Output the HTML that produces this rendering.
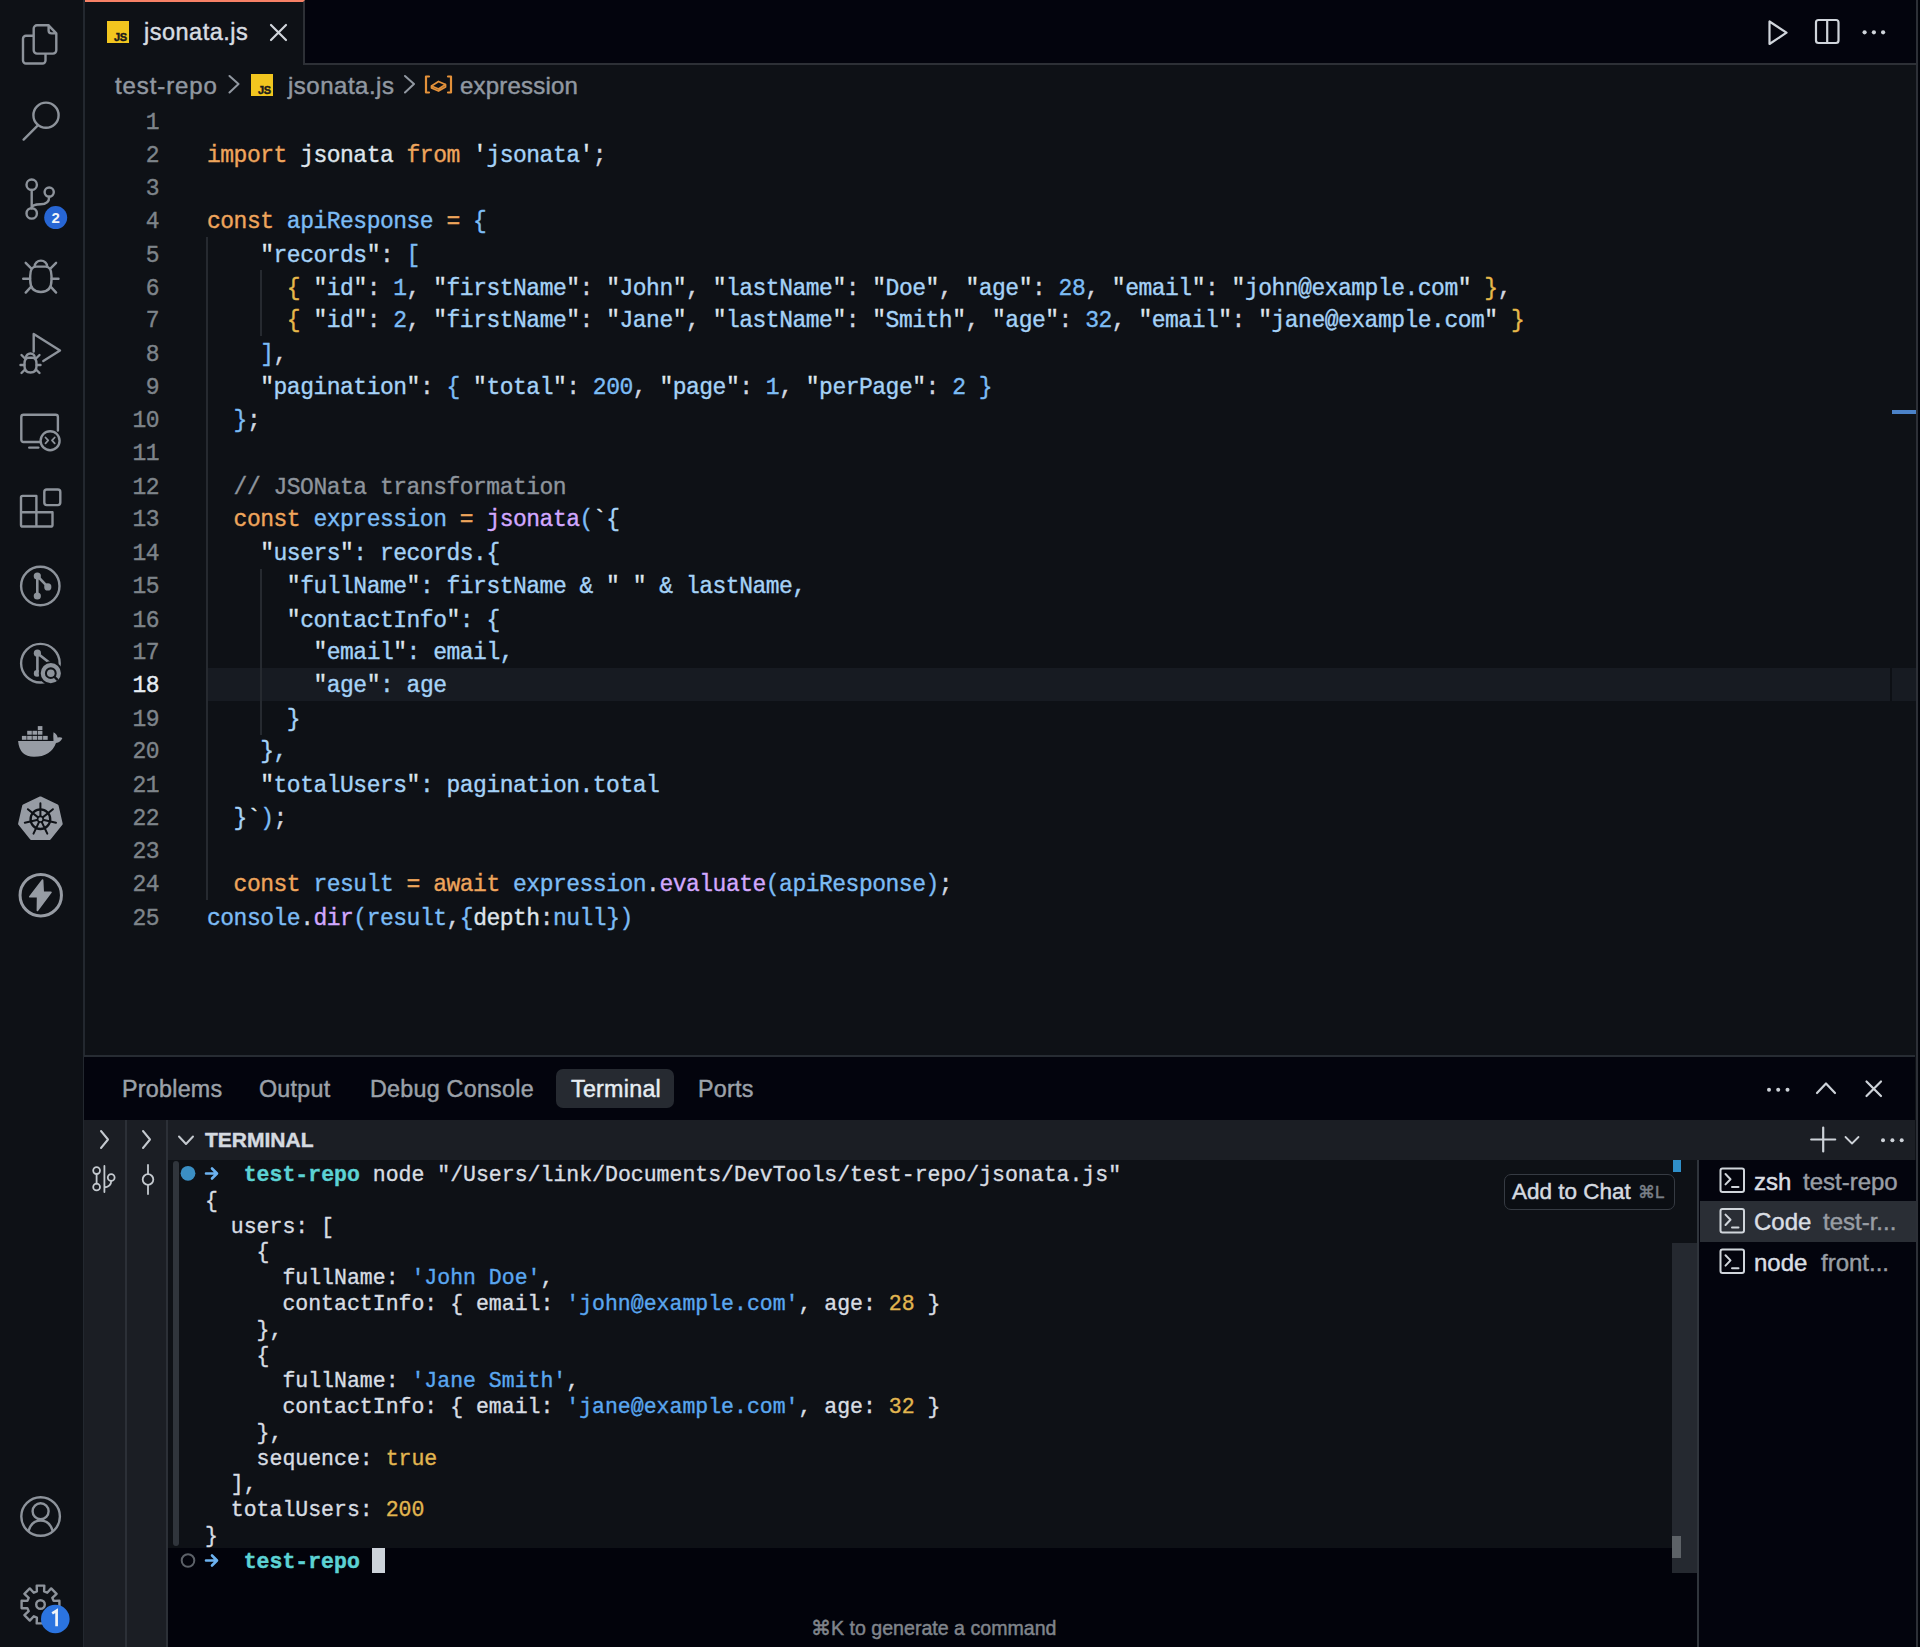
<!DOCTYPE html>
<html><head><meta charset="utf-8">
<style>
*{margin:0;padding:0;box-sizing:border-box}
html,body{width:1920px;height:1647px;overflow:hidden;background:#0e1116}
body{position:relative;font-family:"Liberation Sans",sans-serif}
.abs{position:absolute}
i{font-style:normal}
.t{position:absolute;white-space:pre;line-height:0;-webkit-text-stroke:0.45px currentColor}
/* activity bar */
#act{position:absolute;left:0;top:0;width:85px;height:1647px;background:#0e1116;border-right:2px solid #23282f}
/* tab bar */
#tabs{position:absolute;left:85px;top:0;width:1832px;height:65px;background:#03040d;border-bottom:2px solid #2d3036}
#tab1{position:absolute;left:85px;top:0;width:220px;height:65px;background:#0e1116;border-top:2px solid #f78166;border-right:2px solid #2d3036}
#rborder{position:absolute;left:1916px;top:0;width:2px;height:1647px;background:#2d3037}
#rfill{position:absolute;left:1918px;top:0;width:2px;height:1647px;background:#02040a}
/* editor */
#gutter{position:absolute;left:100px;top:105.5px;width:59px;font-family:"Liberation Mono",monospace;font-size:23px;line-height:30.7037px;transform:scaleY(1.08);transform-origin:0 0;-webkit-text-stroke:0.35px currentColor;text-align:right;color:#7e848a;letter-spacing:-0.5px}
#gutter div{height:30.7037px}
#gutter .cur{color:#e6edf3}
#code{position:absolute;left:207px;top:105.5px;font-family:"Liberation Mono",monospace;font-size:23px;line-height:30.7037px;transform:scaleY(1.08);transform-origin:0 0;-webkit-text-stroke:0.35px currentColor;letter-spacing:-0.5px;white-space:pre;color:#d1d7e0}
.ln{height:30.7037px}
.k{color:#eea55c}.v{color:#7cbcf5}.s{color:#a5d2f7}.p{color:#d1d7e0}.n{color:#7cbcf5}.y{color:#e6b84a}.f{color:#d2a8ff}.c{color:#8d949c}.w{color:#dfe5eb}.q{color:#dfe5eb}
#curline{position:absolute;left:207px;top:668.3px;width:1709px;height:33.2px;background:#171b22}
.guide{position:absolute;width:2px;background:#262a30}
/* panel */
#panel{position:absolute;left:84px;top:1055px;width:1831px;height:592px;background:#03040d;border-top:2px solid #272c33}
.ptab{font-size:23.3px;color:#9ba1a9;letter-spacing:0.25px}
#pill{position:absolute;left:556px;top:1069px;width:118px;height:39px;border-radius:7px;background:#262a31}
#strips{position:absolute;left:84px;top:1120px;width:84px;height:527px;background:#1b1e24}
.vline{position:absolute;width:2px;background:#2c3037}
#thead{position:absolute;left:168px;top:1120px;width:1747px;height:40px;background:#1b1e24}
#tbody{position:absolute;left:168px;top:1160px;width:1530px;height:388px;background:#0e1116}
#tinput{position:absolute;left:168px;top:1548px;width:1530px;height:99px;background:#02030b}
#tgut{position:absolute;left:173px;top:1161px;width:6px;height:385px;border-radius:3px;background:#30353c}
#term{position:absolute;left:205px;top:1163.2px;font-family:"Liberation Mono",monospace;font-size:21.5px;line-height:25.78px;-webkit-text-stroke:0.35px currentColor;white-space:pre;color:#d8dde3}
.tl{height:25.78px}
.tw{color:#d8dde3}.ts{color:#5aa7f0}.tn{color:#e2b650}.tc{color:#5cd2d4;font-weight:bold}
#tlist{position:absolute;left:1699px;top:1160px;width:1216px;height:487px;background:#03040d}
#tsel{position:absolute;left:1700px;top:1201px;width:1215px;height:41px;background:#2a2e35}
#scroll{position:absolute;left:1672px;top:1243px;width:25px;height:330px;background:#252930}
#thumb{position:absolute;left:1672px;top:1535.5px;width:8.5px;height:22px;background:#5d6267}
#chat{position:absolute;left:1504px;top:1174px;width:171px;height:36px;border:1.5px solid #363b43;border-radius:7px;background:#0b0e13}
.sans{font-family:"Liberation Sans",sans-serif}
</style></head><body>
<div id="act"></div>
<svg class="abs" style="left:0;top:0" width="84" height="1647" viewBox="0 0 84 1647" fill="none" stroke="#8d939b" stroke-width="2.4" stroke-linecap="round" stroke-linejoin="round">
<!-- files -->
<path d="M32.6 35.8 H26 a3 3 0 0 0 -3 3 V60.5 a3 3 0 0 0 3 3 H42.5 a3 3 0 0 0 3 -3 V54.4"/>
<path d="M48.6 25.3 H37 a3.3 3.3 0 0 0 -3.3 3.3 V50.3 a3.3 3.3 0 0 0 3.3 3.3 H53 a3.3 3.3 0 0 0 3.3 -3.3 V33.4 Z M48.6 25.3 V30.5 a2.9 2.9 0 0 0 2.9 2.9 H56.3"/>
<!-- search -->
<circle cx="46" cy="115.2" r="12.6"/>
<path d="M23.6 139.6 L37.1 126.1"/>
<!-- source control -->
<circle cx="31.7" cy="184.7" r="5.2"/>
<circle cx="49.2" cy="192.1" r="4.6"/>
<circle cx="31.7" cy="213.4" r="5.2"/>
<path d="M31.7 190 V208.2"/>
<path d="M49.2 196.7 Q49.2 204.2 40.5 204.3 Q32 204.4 31.7 208"/>
<!-- debug bug -->
<path d="M34.6 266.6 a6.3 6 0 0 1 12.6 0"/>
<path d="M30.2 276 Q30.2 266.6 36 266.6 H45.6 Q51.5 266.6 51.5 276 V280 Q51.5 292 40.9 292 Q30.2 292 30.2 280 Z"/>
<path d="M23.2 278.8 H30 M51.7 278.8 H58.5 M25.7 262.8 L31.2 268.4 M56.1 262.8 L50.6 268.4 M25.7 292.6 L31.2 286.6 M56.1 292.6 L50.6 286.6"/>
<!-- run & debug -->
<path d="M33.7 351.5 V334 L60 350.4 L43.3 361"/>
<path d="M26 357.7 a4.4 4.2 0 0 1 8.8 0"/>
<path d="M24.5 364 Q24.5 357.8 28.5 357.8 H32.5 Q36.5 357.8 36.5 364 V366 Q36.5 372.5 30.5 372.5 Q24.5 372.5 24.5 366 Z"/>
<path d="M20.5 365 H24.3 M36.7 365 H40.5 M21.5 355 L25 358.5 M39.5 355 L36 358.5 M21.5 373 L25 369.5 M39.5 373 L36 369.5"/>
<!-- remote explorer -->
<path d="M40 442 H23.5 a2.2 2.2 0 0 1 -2.2 -2.2 V416.9 a2.2 2.2 0 0 1 2.2 -2.2 H55.7 a2.2 2.2 0 0 1 2.2 2.2 V430.5"/>
<path d="M29.2 447.6 H38.3"/>
<circle cx="50.1" cy="440.7" r="9.5"/>
<path d="M45.5 437.5 L48.2 440.4 L45.5 443.3 M54.7 437.5 L52 440.4 L54.7 443.3" stroke-width="1.8"/>
<!-- extensions -->
<path d="M22.6 495.9 H36.4 V526.5 H22.6 a1.6 1.6 0 0 1 -1.6 -1.6 V497.5 a1.6 1.6 0 0 1 1.6 -1.6 Z M21 512.2 H52.5 V524.9 a1.6 1.6 0 0 1 -1.6 1.6 H36.4"/>
<rect x="44.3" y="489.5" width="16" height="15.6" rx="2.5"/>
<!-- gitlens graph -->
<circle cx="40.3" cy="586" r="19.2"/>
<path d="M37.3 576 V596 M37.3 576 L47.8 586.9" stroke-width="2.6"/>
<circle cx="37.3" cy="576" r="3.6" fill="#8d939b" stroke="none"/>
<circle cx="47.8" cy="586.9" r="3.6" fill="#8d939b" stroke="none"/>
<circle cx="37.3" cy="596" r="3.6" fill="#8d939b" stroke="none"/>
<!-- gitlens inspect -->
<circle cx="40.4" cy="663.2" r="19.3"/>
<path d="M37.4 653.2 V673.4 M37.4 653.2 L49.5 662.8" stroke-width="2.6"/>
<circle cx="37.4" cy="653.2" r="3.6" fill="#8d939b" stroke="none"/>
<circle cx="37.1" cy="673.4" r="3.3" fill="#8d939b" stroke="none"/>
<circle cx="50.8" cy="673.2" r="12" fill="#0e1116" stroke="none"/>
<circle cx="50.8" cy="673.2" r="8" stroke-width="4.2"/>
<circle cx="50.8" cy="673.2" r="3.8" fill="#8d939b" stroke="none"/>
<path d="M54.6 677 L57.2 679.6" stroke="#0e1116" stroke-width="2.4"/>
<!-- docker -->
<g fill="#979ca4" stroke="none">
<path d="M18.1 741 H53.5 Q53 736 53.5 732.3 Q57 734 57.6 737.5 Q60.5 736.8 62.4 738 Q60.5 742.5 56 743 Q51 756.8 34 756.8 Q19.5 756.8 18.1 741 Z"/>
<rect x="21.9" y="735.9" width="4.6" height="3.9"/><rect x="27.2" y="735.9" width="4.6" height="3.9"/><rect x="32.5" y="735.9" width="4.6" height="3.9"/><rect x="37.8" y="735.9" width="4.6" height="3.9"/><rect x="43.1" y="735.9" width="4.6" height="3.9"/>
<rect x="27.2" y="730.8" width="4.6" height="3.9"/><rect x="32.5" y="730.8" width="4.6" height="3.9"/><rect x="37.8" y="730.8" width="4.6" height="3.9"/>
<rect x="37.8" y="726.1" width="4.6" height="3.9"/>
</g>
<!-- kubernetes -->
<path d="M40.4 797.9 L57.1 805.9 L61.2 823.9 L49.6 838.4 L31.2 838.4 L19.6 823.9 L23.7 805.9 Z" fill="#979ca4" stroke="#979ca4" stroke-width="3"/>
<circle cx="40.4" cy="819.2" r="9.8" stroke="#0e1116" stroke-width="2.4"/>
<path d="M40.4 816.7 L40.4 803.2 M42.4 817.6 L52.9 809.2 M42.8 819.8 L56.0 822.8 M41.5 821.5 L47.3 833.6 M39.3 821.5 L33.5 833.6 M38.0 819.8 L24.8 822.8 M38.4 817.6 L27.9 809.2 " stroke="#0e1116" stroke-width="2"/>
<circle cx="40.4" cy="819.2" r="2.8" fill="#979ca4" stroke="#0e1116" stroke-width="1.6"/>
<!-- lightning -->
<circle cx="40.75" cy="895.2" r="20.7" stroke="#979ca4" stroke-width="3"/>
<path d="M42.6 880 L29.8 896.8 H37.6 L37.4 910.5 L51 892.3 H43.2 Z" fill="#979ca4" stroke="#979ca4" stroke-width="1.6"/>
<!-- account -->
<circle cx="40.6" cy="1516.5" r="19.3"/>
<circle cx="40.6" cy="1511.2" r="8"/>
<path d="M28.5 1531 Q31.5 1520.5 40.6 1520.5 Q49.7 1520.5 52.7 1531"/>
<!-- gear -->
<path d="M36.9 1591.4 L36.7 1585.6 L44.3 1585.6 L44.1 1591.4 L47.2 1592.7 L51.2 1588.4 L56.6 1593.8 L52.3 1597.8 L53.6 1600.9 L59.4 1600.7 L59.4 1608.3 L53.6 1608.1 L52.3 1611.2 L56.6 1615.2 L51.2 1620.6 L47.2 1616.3 L44.1 1617.6 L44.3 1623.4 L36.7 1623.4 L36.9 1617.6 L33.8 1616.3 L29.8 1620.6 L24.4 1615.2 L28.7 1611.2 L27.4 1608.1 L21.6 1608.3 L21.6 1600.7 L27.4 1600.9 L28.7 1597.8 L24.4 1593.8 L29.8 1588.4 L33.8 1592.7 Z"/>
<circle cx="40.5" cy="1604.5" r="4.3"/>
<circle cx="55.7" cy="217.6" r="11.5" fill="#2766d4" stroke="none"/>
<text x="55.7" y="223" text-anchor="middle" style="font-family:'Liberation Sans',sans-serif;font-weight:bold" font-size="15" fill="#f0f4f8" stroke="none">2</text>
<circle cx="55.3" cy="1619" r="14.3" fill="#2b74e0" stroke="none"/>
<path d="M52.2 1613.3 L56.6 1610.6 V1626.2" stroke="#f0f4f8" stroke-width="2.7" stroke-linecap="butt" stroke-linejoin="miter" fill="none"/>
</svg>

<div id="tabs"></div>
<div id="tab1"></div>
<!-- tab content -->
<div class="abs" style="left:107px;top:21px;width:22px;height:22px;background:#f2c61f"></div>
<div class="t" style="left:114px;top:37px;font-size:11px;font-weight:bold;color:#1b1b1b;letter-spacing:-0.3px">JS</div>
<div class="t" style="left:144px;top:32.3px;font-size:23.5px;color:#d8dde2;letter-spacing:0.5px">jsonata.js</div>
<svg class="abs" style="left:0;top:0" width="1920" height="64" fill="none" stroke="#d0d5db" stroke-width="2.2" stroke-linecap="round" stroke-linejoin="round">
<path d="M271 25 L286 40 M286 25 L271 40"/>
<path d="M1769.5 21.5 V44 L1786.5 32.7 Z"/>
<rect x="1816" y="20" width="22.5" height="23" rx="2.5"/>
<path d="M1827.2 20 V43"/>
<g fill="#d0d5db" stroke="none"><circle cx="1864.6" cy="32.3" r="2.1"/><circle cx="1873.9" cy="32.3" r="2.1"/><circle cx="1883.1" cy="32.3" r="2.1"/></g>
</svg>
<!-- breadcrumbs -->
<div class="t" style="left:115px;top:86px;font-size:24px;color:#9198a1;letter-spacing:0.9px">test-repo</div>
<div class="abs" style="left:251px;top:74px;width:22px;height:22px;background:#f2c61f"></div>
<div class="t" style="left:258px;top:90px;font-size:11px;font-weight:bold;color:#1b1b1b;letter-spacing:-0.3px">JS</div>
<div class="t" style="left:288px;top:86px;font-size:24px;color:#9198a1;letter-spacing:0.5px">jsonata.js</div>
<div class="t" style="left:460px;top:86px;font-size:24px;color:#9198a1;letter-spacing:0.2px">expression</div>
<svg class="abs" style="left:0;top:64px" width="600" height="40" fill="none" stroke="#9198a1" stroke-width="2" stroke-linecap="round" stroke-linejoin="round">
<path d="M229.5 12 L238.5 20 L229.5 28.5 M405 12 L414 20 L405 28.5"/>
<g stroke="#e3913a" stroke-width="2.2"><path d="M429 12.5 H426 V28.5 H429 M448 12.5 H451 V28.5 H448"/><path d="M431.5 22 L438.5 17.5 L445.5 20.5 V23 L438.5 27 L431.5 24 Z M431.5 22 L438.5 25 L445.5 20.5" stroke-width="1.8"/></g>
</svg>
<div id="curline"></div>
<div class="abs" style="left:1890px;top:668.3px;width:2px;height:33.2px;background:#0d1015"></div>
<div class="guide" style="left:206.3px;top:237px;height:663px"></div>
<div class="guide" style="left:259.6px;top:270px;height:66px"></div>
<div class="guide" style="left:259.6px;top:568.5px;height:166px"></div>
<div class="abs" style="left:1891.5px;top:410px;width:24.5px;height:3.7px;background:#4b82c8"></div>
<div id="gutter"><div>1</div>
<div>2</div>
<div>3</div>
<div>4</div>
<div>5</div>
<div>6</div>
<div>7</div>
<div>8</div>
<div>9</div>
<div>10</div>
<div>11</div>
<div>12</div>
<div>13</div>
<div>14</div>
<div>15</div>
<div>16</div>
<div>17</div>
<div class="cur">18</div>
<div>19</div>
<div>20</div>
<div>21</div>
<div>22</div>
<div>23</div>
<div>24</div>
<div>25</div></div>
<div id="code"><div class="ln"></div><div class="ln"><i class="k">import</i><i class="w"> jsonata </i><i class="k">from</i> <i class="q">'</i><i class="s">jsonata</i><i class="q">'</i><i class="p">;</i></div><div class="ln"></div><div class="ln"><i class="k">const</i> <i class="v">apiResponse</i> <i class="k">=</i> <i class="v">{</i></div><div class="ln">    <i class="q">"</i><i class="s">records</i><i class="q">"</i><i class="p">: </i><i class="v">[</i></div><div class="ln">      <i class="y">{</i> <i class="q">"</i><i class="s">id</i><i class="q">"</i><i class="p">: </i><i class="n">1</i><i class="p">, </i><i class="q">"</i><i class="s">firstName</i><i class="q">"</i><i class="p">: </i><i class="q">"</i><i class="s">John</i><i class="q">"</i><i class="p">, </i><i class="q">"</i><i class="s">lastName</i><i class="q">"</i><i class="p">: </i><i class="q">"</i><i class="s">Doe</i><i class="q">"</i><i class="p">, </i><i class="q">"</i><i class="s">age</i><i class="q">"</i><i class="p">: </i><i class="n">28</i><i class="p">, </i><i class="q">"</i><i class="s">email</i><i class="q">"</i><i class="p">: </i><i class="q">"</i><i class="s">john@example.com</i><i class="q">"</i> <i class="y">}</i><i class="p">,</i></div><div class="ln">      <i class="y">{</i> <i class="q">"</i><i class="s">id</i><i class="q">"</i><i class="p">: </i><i class="n">2</i><i class="p">, </i><i class="q">"</i><i class="s">firstName</i><i class="q">"</i><i class="p">: </i><i class="q">"</i><i class="s">Jane</i><i class="q">"</i><i class="p">, </i><i class="q">"</i><i class="s">lastName</i><i class="q">"</i><i class="p">: </i><i class="q">"</i><i class="s">Smith</i><i class="q">"</i><i class="p">, </i><i class="q">"</i><i class="s">age</i><i class="q">"</i><i class="p">: </i><i class="n">32</i><i class="p">, </i><i class="q">"</i><i class="s">email</i><i class="q">"</i><i class="p">: </i><i class="q">"</i><i class="s">jane@example.com</i><i class="q">"</i> <i class="y">}</i></div><div class="ln">    <i class="v">]</i><i class="p">,</i></div><div class="ln">    <i class="q">"</i><i class="s">pagination</i><i class="q">"</i><i class="p">: </i><i class="v">{</i> <i class="q">"</i><i class="s">total</i><i class="q">"</i><i class="p">: </i><i class="n">200</i><i class="p">, </i><i class="q">"</i><i class="s">page</i><i class="q">"</i><i class="p">: </i><i class="n">1</i><i class="p">, </i><i class="q">"</i><i class="s">perPage</i><i class="q">"</i><i class="p">: </i><i class="n">2</i> <i class="v">}</i></div><div class="ln">  <i class="v">}</i><i class="p">;</i></div><div class="ln"></div><div class="ln">  <i class="c">// JSONata transformation</i></div><div class="ln">  <i class="k">const</i> <i class="v">expression</i> <i class="k">=</i> <i class="f">jsonata</i><i class="v">(</i><i class="q">`</i><i class="s">{</i></div><div class="ln">    <i class="q">"</i><i class="s">users</i><i class="q">"</i><i class="s">: records.{</i></div><div class="ln">      <i class="q">"</i><i class="s">fullName</i><i class="q">"</i><i class="s">: firstName &amp; </i><i class="q">"</i><i class="s"> </i><i class="q">"</i><i class="s"> &amp; lastName,</i></div><div class="ln">      <i class="q">"</i><i class="s">contactInfo</i><i class="q">"</i><i class="s">: {</i></div><div class="ln">        <i class="q">"</i><i class="s">email</i><i class="q">"</i><i class="s">: email,</i></div><div class="ln">        <i class="q">"</i><i class="s">age</i><i class="q">"</i><i class="s">: age</i></div><div class="ln">      <i class="s">}</i></div><div class="ln">    <i class="s">},</i></div><div class="ln">    <i class="q">"</i><i class="s">totalUsers</i><i class="q">"</i><i class="s">: pagination.total</i></div><div class="ln">  <i class="s">}</i><i class="q">`</i><i class="v">)</i><i class="p">;</i></div><div class="ln"></div><div class="ln">  <i class="k">const</i> <i class="v">result</i> <i class="k">=</i> <i class="k">await</i> <i class="v">expression</i><i class="p">.</i><i class="f">evaluate</i><i class="v">(</i><i class="v">apiResponse</i><i class="v">)</i><i class="p">;</i></div><div class="ln"><i class="v">console</i><i class="p">.</i><i class="f">dir</i><i class="v">(</i><i class="v">result</i><i class="p">,</i><i class="v">{</i><i class="w">depth</i><i class="p">:</i><i class="v">null</i><i class="v">}</i><i class="v">)</i></div></div>
<!-- panel -->
<div id="panel"></div>
<div id="pill"></div>
<div class="t ptab" style="left:122px;top:1088.5px">Problems</div>
<div class="t ptab" style="left:259px;top:1088.5px">Output</div>
<div class="t ptab" style="left:370px;top:1088.5px">Debug Console</div>
<div class="t ptab" style="left:571px;top:1088.5px;color:#e6edf3">Terminal</div>
<div class="t ptab" style="left:698px;top:1088.5px">Ports</div>
<div id="strips"></div>
<div class="vline" style="left:125px;top:1120px;height:527px"></div>
<div class="vline" style="left:166px;top:1120px;height:527px"></div>
<div id="thead"></div>
<svg class="abs" style="left:1700px;top:1060px" width="220" height="100" fill="none" stroke="#cdd2d8" stroke-width="2.2" stroke-linecap="round" stroke-linejoin="round">
<g fill="#cdd2d8" stroke="none"><circle cx="69" cy="29.7" r="2"/><circle cx="78.2" cy="29.7" r="2"/><circle cx="87.5" cy="29.7" r="2"/></g>
<path d="M117 33 L126 23.5 L135 33"/>
<path d="M166.5 21.5 L181 36 M181 21.5 L166.5 36"/>
<path d="M123.2 67.5 V91.5 M111.2 79.5 H135.2"/>
<path d="M145.5 77 L152 83.5 L158.5 77" stroke-width="1.8"/>
<g fill="#cdd2d8" stroke="none"><circle cx="183" cy="80.3" r="2"/><circle cx="192.4" cy="80.3" r="2"/><circle cx="201.7" cy="80.3" r="2"/></g>
</svg>
<div class="t" style="left:205px;top:1140px;font-size:21px;font-weight:bold;color:#d5dae0">TERMINAL</div>
<svg class="abs" style="left:84px;top:1120px" width="120" height="80" fill="none" stroke="#c4c9cf" stroke-width="2" stroke-linecap="round" stroke-linejoin="round">
<path d="M17 11 L24 19.5 L17 28 M59 11 L66 19.5 L59 28"/>
<path d="M95 16.5 L102 24 L109 16.5"/>
<g stroke-width="1.8"><circle cx="12.6" cy="50.6" r="3.4"/><circle cx="12.6" cy="67" r="3.4"/><circle cx="27.2" cy="57.5" r="3.4"/><path d="M20.4 46 V72 M12.6 54 V63.6 M27.2 61 Q27.2 66.5 20.4 67.5"/></g>
<g stroke-width="1.8"><circle cx="64" cy="59.5" r="5.3"/><path d="M64 45 V54 M64 65 V74"/></g>
</svg>
<div id="tbody"></div>
<div id="tinput"></div>
<div id="tgut"></div>
<div class="abs" style="left:1672.5px;top:1160px;width:8px;height:11.5px;background:#2f8fc9"></div>
<div id="scroll"></div>
<div id="thumb"></div>
<div class="vline" style="left:1697px;top:1160px;height:487px;background:#30353c"></div>
<div id="tlist"></div>
<div id="tsel"></div>
<div id="term"><div class="tl"><i class="tw">   </i><i class="tc">test-repo</i><i class="tw"> node "/Users/link/Documents/DevTools/test-repo/jsonata.js"</i></div><div class="tl"><i class="tw">{</i></div><div class="tl"><i class="tw">  users: [</i></div><div class="tl"><i class="tw">    {</i></div><div class="tl"><i class="tw">      fullName: </i><i class="ts">'John Doe'</i><i class="tw">,</i></div><div class="tl"><i class="tw">      contactInfo: { email: </i><i class="ts">'john@example.com'</i><i class="tw">, age: </i><i class="tn">28</i><i class="tw"> }</i></div><div class="tl"><i class="tw">    },</i></div><div class="tl"><i class="tw">    {</i></div><div class="tl"><i class="tw">      fullName: </i><i class="ts">'Jane Smith'</i><i class="tw">,</i></div><div class="tl"><i class="tw">      contactInfo: { email: </i><i class="ts">'jane@example.com'</i><i class="tw">, age: </i><i class="tn">32</i><i class="tw"> }</i></div><div class="tl"><i class="tw">    },</i></div><div class="tl"><i class="tw">    sequence: </i><i class="tn">true</i></div><div class="tl"><i class="tw">  ],</i></div><div class="tl"><i class="tw">  totalUsers: </i><i class="tn">200</i></div><div class="tl"><i class="tw">}</i></div></div>
<svg class="abs" style="left:168px;top:1160px" width="240" height="420">
<circle cx="20" cy="13.3" r="7.4" fill="#3b8fc4"/>
<circle cx="20" cy="400.5" r="6.3" fill="none" stroke="#5c6168" stroke-width="2"/>
<g fill="none" stroke="#6cb2f0" stroke-width="2.6" stroke-linecap="round" stroke-linejoin="round">
<path d="M38 13.5 H48.5 M44 8.5 L49 13.5 L44 18.5"/>
<path d="M38 400.5 H48.5 M44 395.5 L49 400.5 L44 405.5"/>
</g>
</svg>
<div class="t" style="left:205px;top:1562px;font-family:'Liberation Mono',monospace;font-size:21.5px;color:#5cd2d4;font-weight:bold">   test-repo</div>
<div class="abs" style="left:372px;top:1548px;width:13px;height:25px;background:#cdd3da"></div>
<div class="t" style="left:811px;top:1628px;font-size:19.6px;color:#80858c">⌘K to generate a command</div>
<div id="chat"></div>
<div class="t" style="left:1512px;top:1192px;font-size:22.5px;color:#d5dae0">Add to Chat</div>
<div class="t" style="left:1638px;top:1193px;font-size:17px;color:#7a8088">⌘L</div>
<!-- terminal list -->
<svg class="abs" style="left:1700px;top:1160px" width="60" height="130" fill="none" stroke="#d0d5db" stroke-width="2" stroke-linecap="round" stroke-linejoin="round">
<rect x="20.5" y="8.4" width="23.5" height="23.5" rx="2"/>
<path d="M25.5 14 L30.5 19.2 L25.5 24.4 M32 27 H38.5"/>
<rect x="20.5" y="49" width="23.5" height="23.5" rx="2"/>
<path d="M25.5 54.6 L30.5 59.8 L25.5 65 M32 67.6 H38.5"/>
<rect x="20.5" y="89.6" width="23.5" height="23.5" rx="2"/>
<path d="M25.5 95.2 L30.5 100.4 L25.5 105.6 M32 108.2 H38.5"/>
</svg>
<div class="t" style="left:1754px;top:1181.5px;font-size:24px;color:#dadee3">zsh</div>
<div class="t" style="left:1803px;top:1181.5px;font-size:24px;color:#989da4">test-repo</div>
<div class="t" style="left:1754px;top:1222px;font-size:24px;color:#dadee3">Code</div>
<div class="t" style="left:1823px;top:1222px;font-size:24px;color:#989da4">test-r...</div>
<div class="t" style="left:1754px;top:1262.5px;font-size:24px;color:#dadee3">node</div>
<div class="t" style="left:1821px;top:1262.5px;font-size:24px;color:#989da4">front...</div>
<div id="rborder"></div>
<div id="rfill"></div>
</body></html>
